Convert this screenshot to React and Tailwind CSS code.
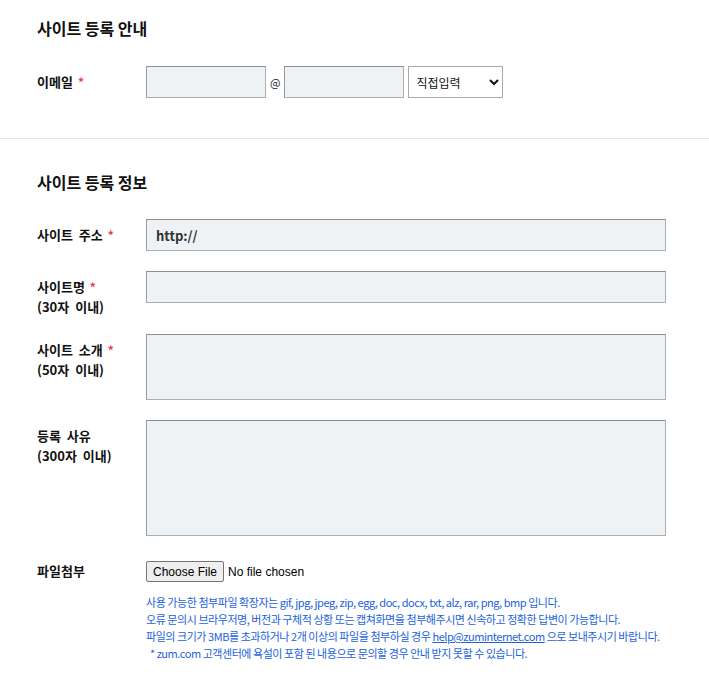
function Star() {
  return <span className="ml-[5px] text-[12px] font-bold text-[#f2375a]">*</span>;
}

function Label({ children, sub, required }) {
  return (
    <div className="w-[109px] shrink-0 pt-[6px] text-[13px] font-bold leading-[20px] text-[#111] [word-spacing:3px]">
      <div>
        {children}
        {required && <Star />}
      </div>
      {sub && <div>{sub}</div>}
    </div>
  );
}

const field =
  'block border border-[#a9aeb3] border-t-[#8c9096] border-l-[#989ca2] bg-[#eef2f5] outline-none';

export default function App() {
  return (
    <div className="min-h-[697px] bg-white font-['Noto_Sans_CJK_KR','Noto_Sans',sans-serif] text-[#111]">
      <section className="px-[37px] pt-[16px] pb-[40px]">
        <h2 className="text-[16px] font-bold leading-[24px]">사이트 등록 안내</h2>
        <div className="mt-[26px] flex items-start">
          <Label required>이메일</Label>
          <div className="flex items-center">
            <input type="text" className={`${field} h-[32px] w-[120px]`} />
            <span className="mx-[4px] text-[11px] leading-none text-[#222]">@</span>
            <input type="text" className={`${field} h-[32px] w-[120px]`} />
            <select className="ml-[4px] h-[32px] w-[95px] border border-[#a9a9a9] bg-white pl-[3px] text-[12px] text-[#111]">
              <option>직접입력</option>
            </select>
          </div>
        </div>
      </section>

      <div className="h-px bg-[#e6e6e6]" />

      <section className="px-[37px] pt-[31px] pb-[30px]">
        <h2 className="text-[16px] font-bold leading-[24px]">사이트 등록 정보</h2>

        <div className="mt-[25px] flex items-start">
          <Label required>사이트 주소</Label>
          <input
            type="text"
            defaultValue="http://"
            className={`${field} h-[32px] w-[520px] px-[9px] text-[13px] font-bold text-[#333]`}
          />
        </div>

        <div className="mt-[20px] flex items-start">
          <Label required sub="(30자 이내)">
            사이트명
          </Label>
          <input type="text" className={`${field} h-[32px] w-[520px]`} />
        </div>

        <div className="mt-[17px] flex items-start">
          <Label required sub="(50자 이내)">
            사이트 소개
          </Label>
          <textarea className={`${field} h-[66px] w-[520px] resize-none`} />
        </div>

        <div className="mt-[20px] flex items-start">
          <Label sub="(300자 이내)">등록 사유</Label>
          <textarea className={`${field} h-[116px] w-[520px] resize-none`} />
        </div>

        <div className="mt-[25px] flex items-start">
          <div className="w-[109px] shrink-0 text-[13px] font-bold leading-[20px]">파일첨부</div>
          <div>
            <input
              type="file"
              className="block font-['Liberation_Sans',Arial,sans-serif] text-[12px] text-black file:mr-[4px] file:h-[21px] file:rounded-[2px] file:border file:border-[#767676] file:bg-[#efefef] file:px-[6px] file:text-[12px] file:text-black"
            />
            <div className="mt-[12px] text-[11px] leading-[17px] tracking-[-0.45px] text-[#1b62dc]">
              <p>사용 가능한 첨부파일 확장자는 gif, jpg, jpeg, zip, egg, doc, docx, txt, alz, rar, png, bmp 입니다.</p>
              <p>오류 문의시 브라우저명, 버전과 구체적 상황 또는 캡쳐화면을 첨부해주시면 신속하고 정확한 답변이 가능합니다.</p>
              <p>
                파일의 크기가 3MB를 초과하거나 2개 이상의 파일을 첨부하실 경우{' '}
                <a href="#" className="underline">help@zuminternet.com</a> 으로 보내주시기 바랍니다.
              </p>
              <p className="pl-[4px]">* zum.com 고객센터에 욕설이 포함 된 내용으로 문의할 경우 안내 받지 못할 수 있습니다.</p>
            </div>
          </div>
        </div>
      </section>
    </div>
  );
}
